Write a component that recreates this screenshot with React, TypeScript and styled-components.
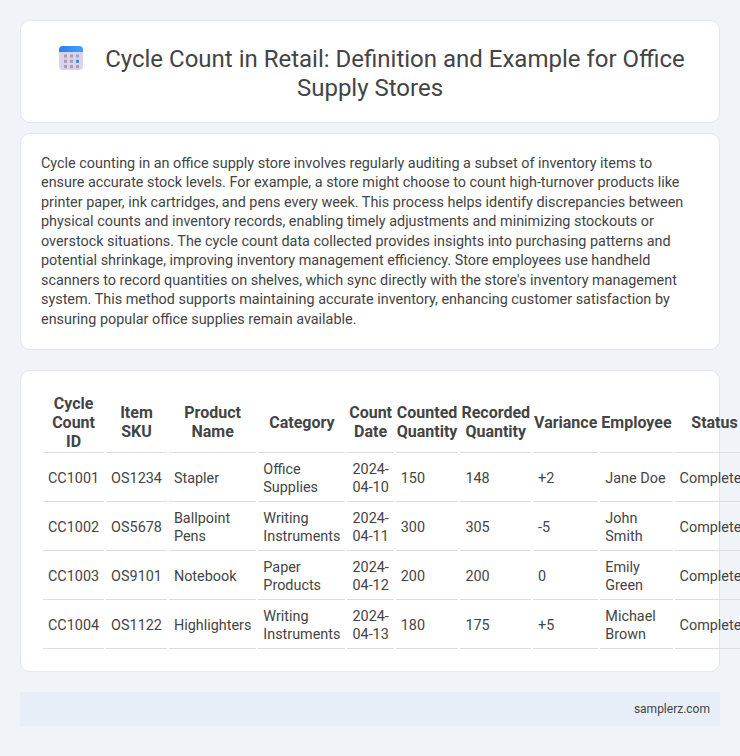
import React from "react";
import styled, { createGlobalStyle } from "styled-components";

const GlobalStyle = createGlobalStyle`
  html, body {
    margin: 0;
    padding: 0;
    overflow-x: hidden;
  }
  body {
    background: #f0f4f9;
    color: #444;
    font-family: Roboto, "Liberation Sans", sans-serif;
  }
`;

const Page = styled.div`
  display: flex;
  flex-direction: column;
  padding: 20px;
  height: 756px;
  box-sizing: border-box;
`;

const Card = styled.section<{ $gap?: number }>`
  background: #fff;
  border: 1px solid #e2e6f0;
  border-radius: 10px;
  padding: 20px;
  margin-bottom: ${(p) => p.$gap ?? 0}px;
`;

const TitleCard = styled(Card)`
  padding: 23px 20px 19px;
`;

const Title = styled.h1`
  margin: 0;
  font-size: 24px;
  font-weight: 400;
  line-height: 29px;
  text-align: center;
  color: #444;
`;

const TitleIcon = styled.svg`
  width: 28px;
  height: 28px;
  margin-left: 2px;
  margin-right: 20px;
  vertical-align: -5px;
`;

const Intro = styled.p`
  margin: 0;
  font-size: 14.4px;
  line-height: 19.44px;
  color: #444;
`;

const Table = styled.table`
  border-spacing: 2px;
  border-collapse: separate;
  width: 100%;
`;

const Th = styled.th`
  padding: 1px;
  font-size: 16px;
  font-weight: 700;
  line-height: 19px;
  text-align: center;
  color: #444;
  border-bottom: 1px solid #ddd;
`;

const Td = styled.td`
  padding: 6px 5px 4px;
  font-size: 14.4px;
  line-height: 18px;
  color: #444;
  border-bottom: 1px solid #ddd;
`;

const Footer = styled.footer`
  background: #e8eef7;
  padding: 10px;
  font-size: 12px;
  line-height: 14px;
  text-align: right;
  color: #444;
`;

const headers = [
  "Cycle Count ID",
  "Item SKU",
  "Product Name",
  "Category",
  "Count Date",
  "Counted Quantity",
  "Recorded Quantity",
  "Variance",
  "Employee",
  "Status",
];

const rows = [
  ["CC1001", "OS1234", "Stapler", "Office Supplies", "2024-04-10", "150", "148", "+2", "Jane Doe", "Completed"],
  ["CC1002", "OS5678", "Ballpoint Pens", "Writing Instruments", "2024-04-11", "300", "305", "-5", "John Smith", "Completed"],
  ["CC1003", "OS9101", "Notebook", "Paper Products", "2024-04-12", "200", "200", "0", "Emily Green", "Completed"],
  ["CC1004", "OS1122", "Highlighters", "Writing Instruments", "2024-04-13", "180", "175", "+5", "Michael Brown", "Completed"],
];

const CalendarIcon = () => (
  <TitleIcon viewBox="0 0 28 28" aria-hidden="true">
    <defs>
      <linearGradient id="calTop" x1="0" y1="0" x2="1" y2="0">
        <stop offset="0" stopColor="#2f7cf0" />
        <stop offset="1" stopColor="#3fa4f5" />
      </linearGradient>
    </defs>
    <rect x="2" y="2" width="24" height="24" rx="4" fill="#dcd3ea" />
    <path d="M2 8V6a4 4 0 0 1 4-4h16a4 4 0 0 1 4 4v2z" fill="url(#calTop)" />
    {[0, 1, 2].map((r) =>
      [0, 1, 2].map((c) => (
        <rect
          key={`${r}-${c}`}
          x={7 + c * 6}
          y={10.5 + r * 5.3}
          width="3"
          height="3"
          fill={r === 1 && c === 2 ? "#2f8cf0" : "#a49db4"}
        />
      ))
    )}
  </TitleIcon>
);

export default function App() {
  return (
    <Page>
      <GlobalStyle />
      <TitleCard $gap={10}>
        <Title>
          <CalendarIcon />
          Cycle Count in Retail: Definition and Example for Office Supply Stores
        </Title>
      </TitleCard>
      <Card $gap={20}>
        <Intro>
          Cycle counting in an office supply store involves regularly auditing a subset of inventory items to ensure
          accurate stock levels. For example, a store might choose to count high-turnover products like printer paper,
          ink cartridges, and pens every week. This process helps identify discrepancies between physical counts and
          inventory records, enabling timely adjustments and minimizing stockouts or overstock situations. The cycle
          count data collected provides insights into purchasing patterns and potential shrinkage, improving inventory
          management efficiency. Store employees use handheld scanners to record quantities on shelves, which sync
          directly with the store's inventory management system. This method supports maintaining accurate inventory,
          enhancing customer satisfaction by ensuring popular office supplies remain available.
        </Intro>
      </Card>
      <Card $gap={20}>
        <Table>
          <thead>
            <tr>
              {headers.map((h) => (
                <Th key={h}>{h}</Th>
              ))}
            </tr>
          </thead>
          <tbody>
            {rows.map((row) => (
              <tr key={row[0]}>
                {row.map((cell, i) => (
                  <Td key={i}>{cell}</Td>
                ))}
              </tr>
            ))}
          </tbody>
        </Table>
      </Card>
      <Footer>samplerz.com</Footer>
    </Page>
  );
}
